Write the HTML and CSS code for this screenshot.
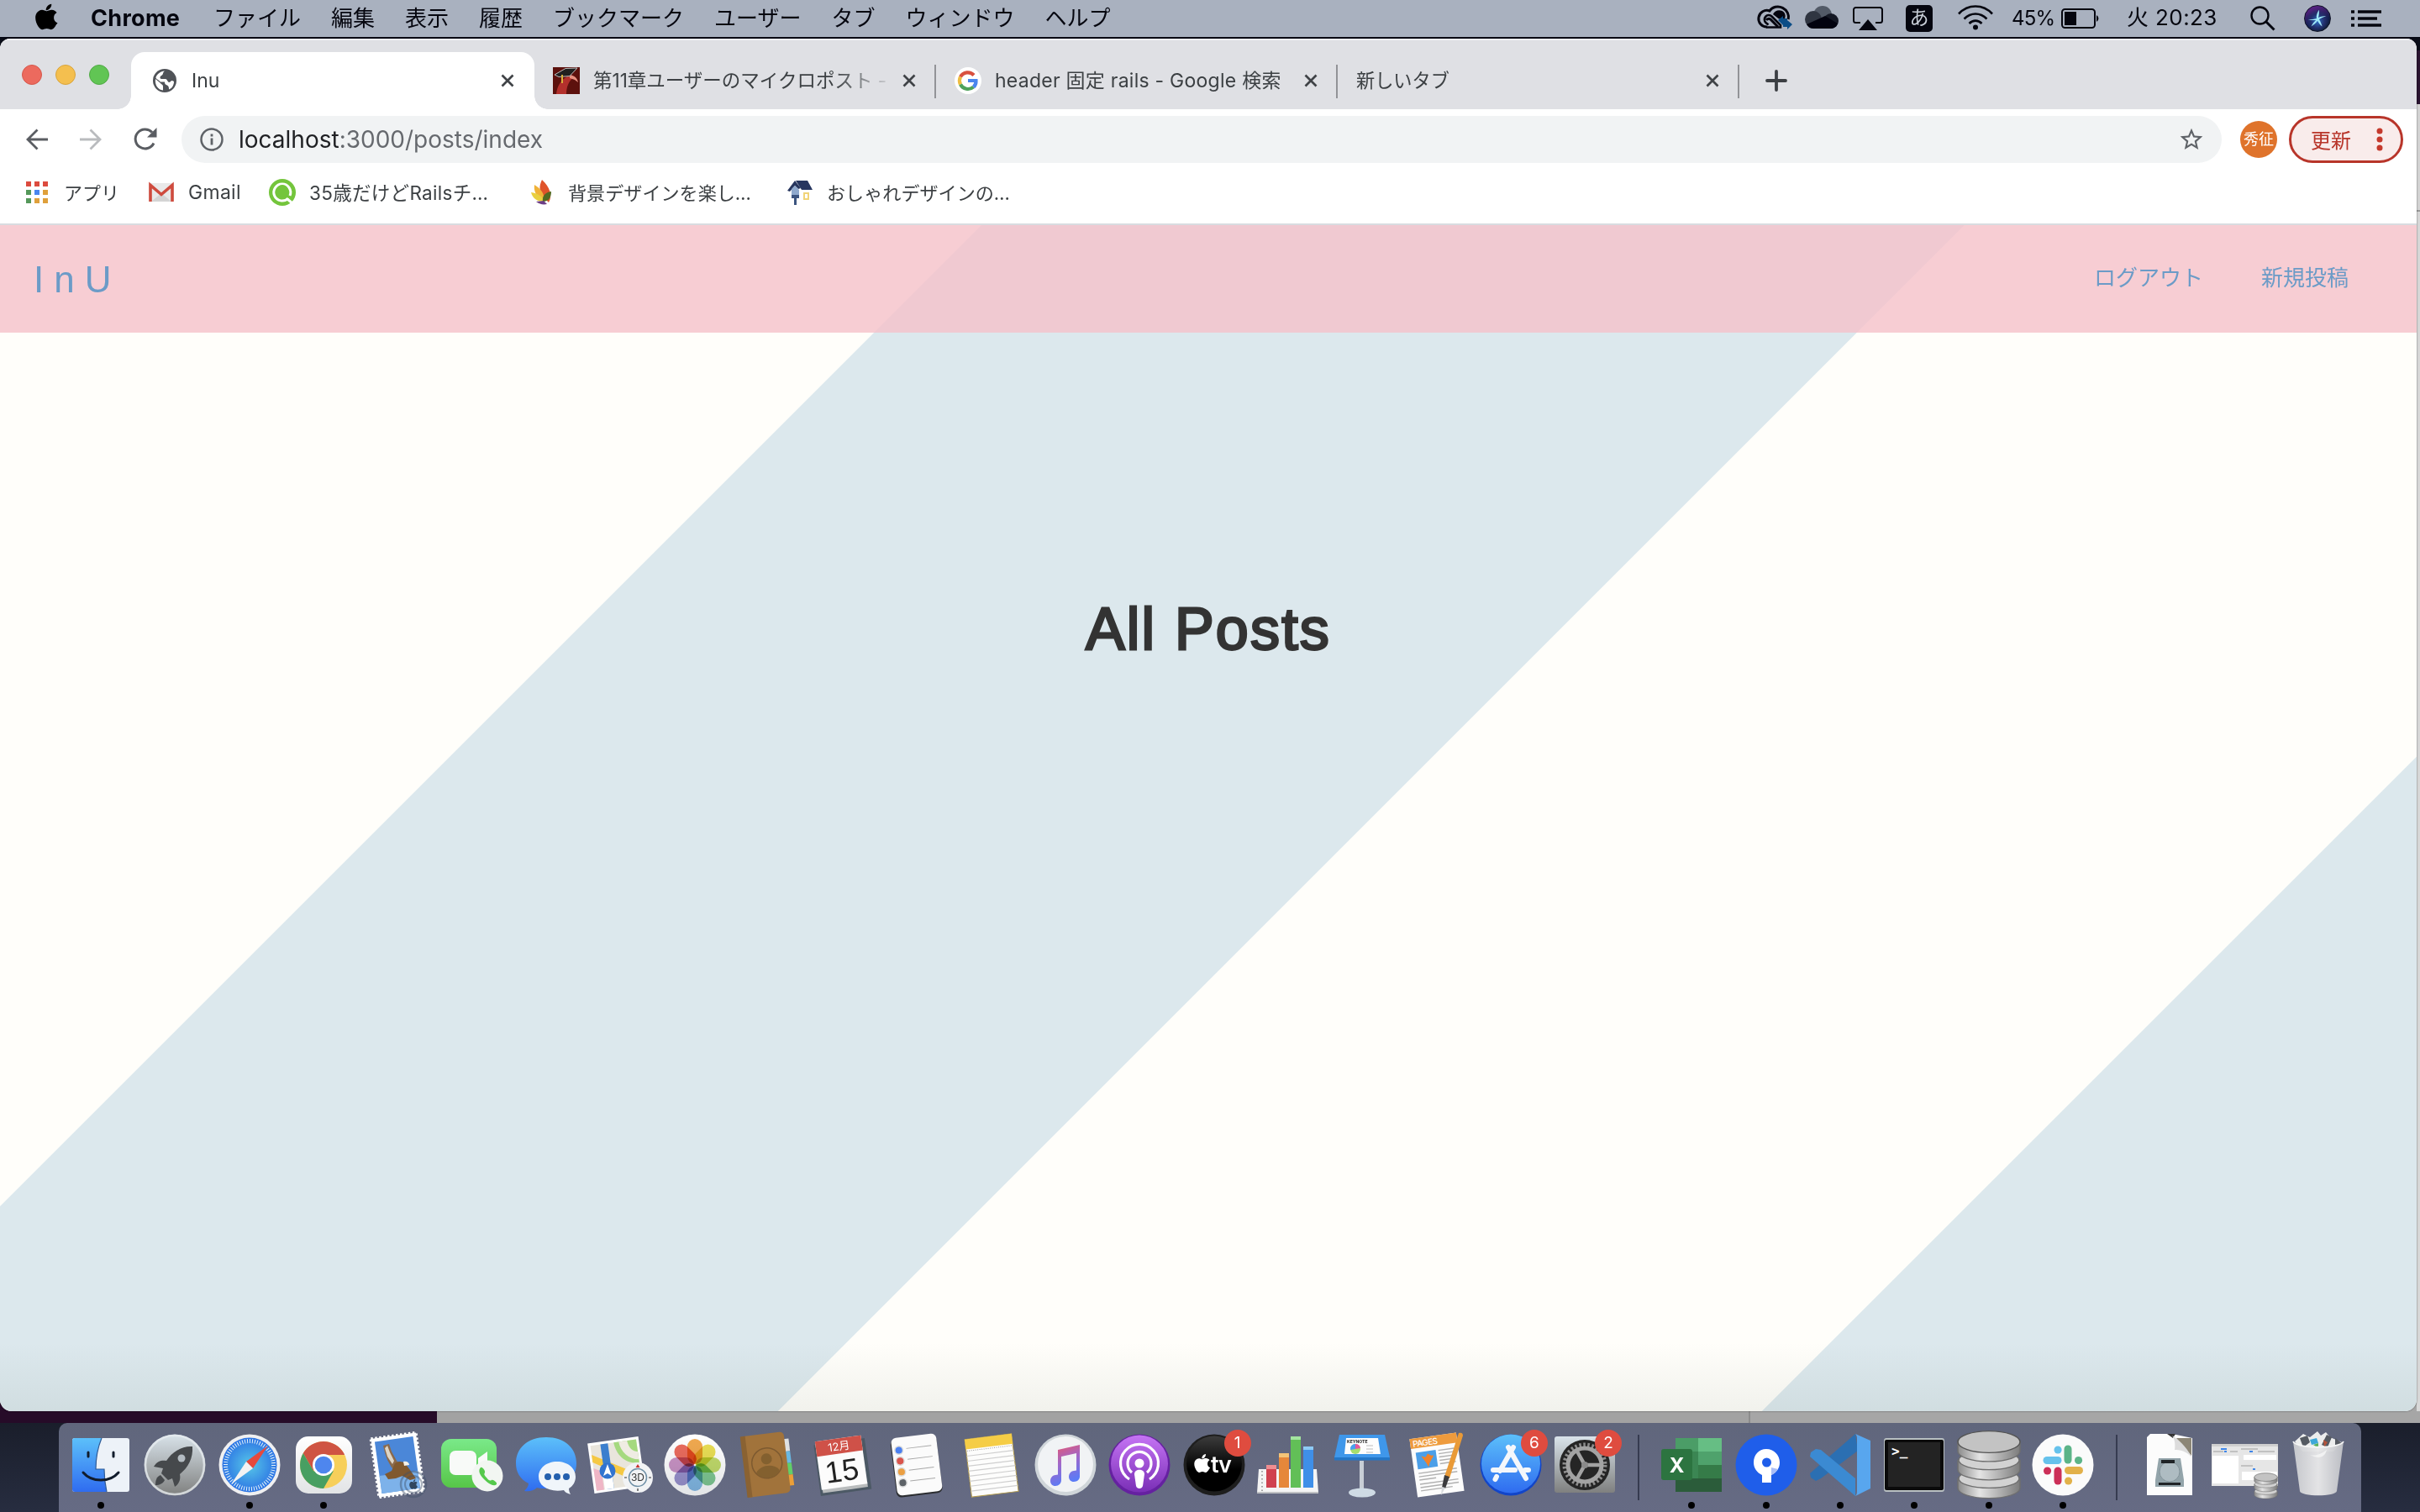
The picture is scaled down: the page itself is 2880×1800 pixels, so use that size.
FILE: index.html
```html
<!DOCTYPE html>
<html lang="ja">
<head>
<meta charset="utf-8">
<title>Inu</title>
<link rel="stylesheet" href="styles.css">
</head>
<body>
<svg class="defs" width="0" height="0" aria-hidden="true">
  <defs>
    <linearGradient id="sky" x1="0" y1="0" x2="0" y2="1"><stop offset="0" stop-color="#5cc0fa"/><stop offset="1" stop-color="#2f6cf0"/></linearGradient>
    <linearGradient id="silver" x1="0" y1="0" x2="0" y2="1"><stop offset="0" stop-color="#d9e3ea"/><stop offset="1" stop-color="#7f807f"/></linearGradient>
    <linearGradient id="white" x1="0" y1="0" x2="0" y2="1"><stop offset="0" stop-color="#fff"/><stop offset="1" stop-color="#e2e4e6"/></linearGradient>
    <linearGradient id="green" x1="0" y1="0" x2="0" y2="1"><stop offset="0" stop-color="#7ae989"/><stop offset="1" stop-color="#57c648"/></linearGradient>
    <linearGradient id="violet" x1="0" y1="0" x2="0" y2="1"><stop offset="0" stop-color="#c574f4"/><stop offset="1" stop-color="#7a2fb6"/></linearGradient>
    <linearGradient id="black" x1="0" y1="0" x2="0" y2="1"><stop offset="0" stop-color="#3c3c3c"/><stop offset=".6" stop-color="#000"/></linearGradient>
    <linearGradient id="note" x1="0" y1="0" x2=".3" y2="1"><stop offset="0" stop-color="#ee5566"/><stop offset=".5" stop-color="#a267c8"/><stop offset="1" stop-color="#5b7bf6"/></linearGradient>
    <radialGradient id="compass"><stop offset="0" stop-color="#57c7e8"/><stop offset="1" stop-color="#2c74e4"/></radialGradient>
    <linearGradient id="metal" x1="0" y1="0" x2="1" y2="0"><stop offset="0" stop-color="#8b8b8b"/><stop offset=".35" stop-color="#e4e4e4"/><stop offset="1" stop-color="#7c7c7c"/></linearGradient>
    <linearGradient id="trash" x1="0" y1="0" x2="1" y2="0"><stop offset="0" stop-color="#c9cbcf"/><stop offset=".5" stop-color="#e9e9ea"/><stop offset="1" stop-color="#bfc1c6"/></linearGradient>
    <symbol id="close" viewBox="0 0 16 16"><path d="M1.5 1.5l13 13M14.500 1.500l-13 13" stroke="#3f4246" stroke-width="2.700" fill="none"/></symbol>
    <symbol id="apple" viewBox="0 0 170 170"><path d="M150.400 130.300c-2.500 5.700-5.400 10.900-8.700 15.700-4.600 6.500-8.300 11-11.200 13.500-4.500 4.100-9.300 6.200-14.400 6.300-3.700 0-8.100-1-13.300-3.200-5.200-2.100-10-3.200-14.300-3.200-4.600 0-9.500 1.100-14.700 3.200-5.300 2.200-9.500 3.300-12.800 3.400-4.900.2-9.800-1.900-14.700-6.500-3.100-2.700-7.100-7.400-11.800-14-5.100-7.100-9.200-15.400-12.500-24.900-3.500-10.200-5.200-20.100-5.200-29.700 0-11 2.400-20.500 7.100-28.400 3.700-6.400 8.700-11.400 15-15.100 6.200-3.700 13-5.600 20.200-5.700 4 0 9.200 1.200 15.700 3.600 6.500 2.400 10.700 3.700 12.500 3.700 1.400 0 6-1.400 13.900-4.300 7.500-2.700 13.800-3.800 19-3.400 14 1.100 24.600 6.700 31.600 16.700-12.500 7.600-18.700 18.200-18.600 31.900.1 10.600 4 19.500 11.500 26.500 3.400 3.300 7.300 5.800 11.600 7.600-.9 2.700-1.900 5.300-2.900 7.800zM118.300 7.500c0 8.300-3 16.100-9.100 23.300-7.300 8.500-16.100 13.500-25.700 12.700a26 26 0 0 1-.2-3.100c0-8 3.500-16.600 9.700-23.500 3.100-3.600 7-6.500 11.700-8.900 4.700-2.300 9.200-3.600 13.400-3.800.1 1.100.2 2.200.2 3.300z"/></symbol>
    <symbol id="disks" viewBox="0 0 78 104" preserveAspectRatio="none">
      <g stroke="#6f6f6f" stroke-width="1.500" fill="url(#metal)">
        <path d="M2 72v14c0 8 16 15 37 15s37-7 37-15V72z"/><ellipse cx="39" cy="72" rx="36" ry="14" fill="#d2d2d2"/>
        <path d="M2 45v14c0 8 16 15 37 15s37-7 37-15V45z"/><ellipse cx="39" cy="45" rx="36" ry="14" fill="#d2d2d2"/>
        <path d="M2 18v14c0 8 16 15 37 15s37-7 37-15V18z"/><ellipse cx="39" cy="18" rx="37" ry="16" fill="#c3c3c3" stroke="#555"/>
      </g>
    </symbol>
  </defs>
</svg>

<header class="menubar">
  <svg class="menubar-apple" viewBox="0 0 170 170"><use href="#apple"/></svg>
  <nav class="menus">
    <b class="menu-app">Chrome</b><span>ファイル</span><span>編集</span><span>表示</span><span>履歴</span><span>ブックマーク</span><span>ユーザー</span><span>タブ</span><span>ウィンドウ</span><span>ヘルプ</span>
  </nav>
  <div class="status">
    <svg class="st-cc" viewBox="0 0 42 30"><path d="M12 26a9.800 9.800 0 1 1 3-19C18 2 25 .5 30.500 3.300 36 6 38.500 12 37.200 17" fill="none" stroke="#05050f" stroke-width="3"/><path d="M11 26.500h17V24L17.500 13.500a5 5 0 1 0-7 7.500l3 2.500" fill="none" stroke="#05050f" stroke-width="2.600"/><path d="M19 11c2-5 9-6.500 13-2.500 2 2 2 5 1 8h-7z" fill="#05050f"/><path d="M11 18a3.500 3.500 0 0 1 5-1l9 9" fill="none" stroke="#05050f" stroke-width="3"/><path d="M25 18l6-5v3h5v5h-5v3zM42 23l-6-5v3h-5v5h5v3z" fill="#0b4d86"/></svg>
    <svg class="st-cloud" viewBox="0 0 40 27"><circle cx="21" cy="11" r="11" fill="#525a67"/><circle cx="10" cy="16" r="10" fill="#2f3541"/><circle cx="31" cy="18" r="9" fill="#141824"/><path d="M2 22l22-10 15 9a9 9 0 0 1-8 6H10a9 9 0 0 1-8-5z" fill="#02030f"/></svg>
    <svg class="st-air" viewBox="0 0 36 28"><path d="M9 19H3.500A2.500 2.500 0 0 1 1 16.500V3.500A2.500 2.500 0 0 1 3.500 1h29A2.500 2.500 0 0 1 35 3.500v13a2.500 2.500 0 0 1-2.500 2.500H27" fill="none" stroke="#05060f" stroke-width="2"/><path d="M18 15l11 13H7z" fill="#05060f"/></svg>
    <span class="st-ime">あ</span>
    <svg class="st-wifi" viewBox="0 0 42 30"><g fill="none" stroke="#05060f" stroke-width="2.600"><path d="M1 10.500C12-1.500 30-1.500 41 10.500M7.500 16.500c8-8 19-8 27 0M13.500 22c4.500-4.500 10.500-4.500 15 0"/></g><circle cx="21" cy="26.500" r="3" fill="#05060f"/></svg>
    <span class="st-pct">45%</span>
    <svg class="st-batt" viewBox="0 0 46 24"><rect x="1" y="1" width="39" height="22" rx="3.500" fill="none" stroke="#05060f" stroke-width="2"/><rect x="4" y="4" width="14" height="16" fill="#05060f"/><path d="M42 8a4.500 4.500 0 0 1 0 8z" fill="#05060f"/></svg>
    <span class="st-clock">火 20:23</span>
    <svg class="st-search" viewBox="0 0 30 30"><circle cx="11.500" cy="11.500" r="10" fill="none" stroke="#05060f" stroke-width="2.400"/><path d="M18.500 18.500l10 10" stroke="#05060f" stroke-width="3"/></svg>
    <span class="st-siri"><svg viewBox="0 0 32 32"><path d="M4 18c5-1 8-1 11-2-1-4 1-8 3-11 0 4 0 7-1 10 4-2 7-2 10-2-3 1-6 2-9 4 2 3 3 6 4 9-3-2-4-4-6-7-2 3-5 5-8 7 2-4 4-6 6-8-3 0-6 0-10 0z" fill="#9fe8f7"/></svg></span>
    <svg class="st-list" viewBox="0 0 36 20"><path d="M0 2h4M8 2h28M0 10h4M8 10h23M0 18h4M8 18h28" stroke="#05060f" stroke-width="3.600"/></svg>
  </div>
</header>

<main class="browser">
  <div class="tabstrip">
    <div class="lights"><i class="red"></i><i class="yellow"></i><i class="green"></i></div>
    <div class="tab tab-active">
      <svg class="globe" viewBox="0 0 28 28"><circle cx="14" cy="14" r="14" fill="#505358"/><path d="M3 12l6 5c1 2 3 1 3 4v4.500C6 25 2 19 3 12zM14 2.500c-3 2-1 4-4 5.500-2 1-2 4 0 4h5c2 0 2 3 4 4 2 0 2-2 4-2l2 1c0 4-2 8-6 9.500 0-2 0-4-2-5s-3-1-3-4H9C7 13 3 12 3.500 10 5 6 9 3 14 2.500z" fill="#fff"/></svg>
      <span class="tab-title">Inu</span><svg class="x"><use href="#close"/></svg>
    </div>
    <div class="tab">
      <svg class="fav" viewBox="0 0 32 32"><path fill="#5c110d" d="M0 0h32v32H0z"/><path d="M4 32c1-10 6-17 13-21l8 1c-6 4-9 11-9 20z" fill="#b3302c"/><path d="M20 9c6 1 9 4 10 9l-4-3-6-2z" fill="#e79080"/><path d="M2 9L15 1.500l14-.5-9 9.500-13 1z" fill="#20201f" stroke="#bbb" stroke-width="1"/><path d="M11 9v10" stroke="#d8b13a" stroke-width="2"/></svg>
      <span class="tab-title fade t2">第11章ユーザーのマイクロポスト -</span><svg class="x"><use href="#close"/></svg>
    </div>
    <div class="tab">
      <svg class="fav" viewBox="0 0 32 32"><circle cx="16" cy="16" r="16" fill="#fff"/><g fill="none" stroke-width="4.200"><path d="M23 9.500A10 10 0 0 0 7 11.500" stroke="#d9513f"/><path d="M7 11.500a10 10 0 0 0 0 9" stroke="#eebd42"/><path d="M7 20.500a10 10 0 0 0 15.500 3" stroke="#4ea25a"/><path d="M16 16h9.500c.2 3.500-1 6-3 7.700" stroke="#4a86ee"/></g></svg>
      <span class="tab-title t3">header 固定 rails - Google 検索</span><svg class="x"><use href="#close"/></svg>
    </div>
    <div class="tab">
      <span class="tab-title t4">新しいタブ</span><svg class="x"><use href="#close"/></svg>
    </div>
    <svg class="plus" viewBox="0 0 24 24"><path d="M12 1v22M1 12h22" stroke="#3c3f43" stroke-width="3.800" stroke-linecap="round"/></svg>
  </div>

  <div class="toolbar">
    <svg class="back" viewBox="0 0 26 26"><path d="M26 13H2M13.500 1.500L2 13l11.500 11.500" fill="none" stroke="#5a5d62" stroke-width="2.800"/></svg>
    <svg class="fwd" viewBox="0 0 26 26"><path d="M0 13h24M12.500 1.500L24 13 12.500 24.500" fill="none" stroke="#b9bbbe" stroke-width="2.800"/></svg>
    <svg class="reload" viewBox="0 0 28 28"><path d="M24 18.500A11.500 11.500 0 1 1 22 5.500" fill="none" stroke="#5a5d62" stroke-width="3"/><path d="M27.500 0v11.500H16z" fill="#5a5d62"/></svg>
    <div class="omnibox">
      <svg class="info" viewBox="0 0 28 28"><circle cx="14" cy="14" r="12.500" fill="none" stroke="#5f6368" stroke-width="2.500"/><path d="M14 12.500v8M14 7.500v3" stroke="#5f6368" stroke-width="2.800"/></svg>
      <span class="url"><b>localhost</b>:3000/posts/index</span>
      <svg class="star" viewBox="0 0 24 24"><path d="M22 9.240l-7.190-.62L12 2 9.190 8.630 2 9.240l5.460 4.730L5.820 21 12 17.270 18.180 21l-1.630-7.030L22 9.240zM12 15.400l-3.760 2.270 1-4.280-3.320-2.880 4.380-.38L12 6.100l1.710 4.040 4.380.38-3.320 2.880 1 4.280L12 15.400z" fill="#5f6368"/></svg>
    </div>
    <span class="avatar">秀征</span>
    <button class="update"><span>更新</span><svg viewBox="0 0 8 28"><g fill="#c5392c"><circle cx="4" cy="4" r="3.500"/><circle cx="4" cy="14" r="3.500"/><circle cx="4" cy="24" r="3.500"/></g></svg></button>
  </div>

  <div class="bookmarks">
    <a class="bm bm-apps"><svg viewBox="0 0 26 26"><path fill="#dc4b3e" d="M0 0h6v6H0zM10 0h6v6h-6zM20 0h6v6h-6z"/><path fill="#55985a" d="M0 10h6v6H0zM0 20h6v6H0z"/><path fill="#4a86ee" d="M10 10h6v6h-6z"/><path fill="#dfa03b" d="M20 10h6v6h-6zM10 20h6v6h-6zM20 20h6v6h-6z"/></svg><span>アプリ</span></a>
    <a class="bm bm-gmail"><svg viewBox="0 0 30 22"><rect width="30" height="22" rx="2" fill="#e9e9e9"/><path d="M3 22l12-10 12 10z" fill="#d4d4d4"/><path d="M2 22V2.500l13 11 13-11V22" fill="none" stroke="#cf4b3e" stroke-width="3.600"/></svg><span>Gmail</span></a>
    <a class="bm bm-rails"><svg viewBox="0 0 32 32"><circle cx="16" cy="16" r="16" fill="#74c53c"/><path d="M23 23a10 10 0 1 1 2-3" fill="none" stroke="#fff" stroke-width="3"/><circle cx="16" cy="14" r="7" fill="#74c53c"/><path d="M22 24l6 5" stroke="#fff" stroke-width="3"/></svg><span>35歳だけどRailsチ…</span></a>
    <a class="bm bm-leaf"><svg viewBox="0 0 26 30"><path d="M14 0c-4 8-3 14 1 20l7 7c5-8 1-19-8-27z" fill="#e0532a"/><path d="M5 6c-1 8 2 14 11 19 2-8-4-15-11-19z" fill="#f0b238"/><path d="M1 15c2 8 8 11 16 11-2-6-8-10-16-11z" fill="#e9cf3f"/><path d="M25 14c-8 1-11 6-10 12 7 0 10-5 10-12z" fill="#526a22"/><path d="M7 26c4 3 8 4 13 3l-4-4z" fill="#6c3e86"/></svg><span>背景デザインを楽し…</span></a>
    <a class="bm bm-house"><svg viewBox="0 0 30 30"><path d="M0 13L9 1l7 9-3 1-4-4-6 7z" fill="#27365f"/><path d="M10 1h14l6 11H17z" fill="#27365f"/><path d="M5 11l4-4 5 5v10H5z" fill="#8fa9cd"/><path d="M5 18h9v4H5zM8 22h3v8H8z" fill="#3c5580"/><rect x="20" y="16" width="5" height="7" fill="none" stroke="#f1d478" stroke-width="2"/></svg><span>おしゃれデザインの…</span></a>
  </div>

  <section class="page">
    <header class="site-header">
      <a class="logo">InU</a>
      <nav class="site-nav"><a>ログアウト</a><a>新規投稿</a></nav>
    </header>
    <h1>All Posts</h1>
  </section>
</main>

<footer class="dock">
  <div class="app run"><svg viewBox="0 0 88 106"><rect x="10" y="18" width="68" height="64" rx="3" fill="#edf2f8"/><path d="M45 18c-5 12-7 24-7 37h10c0 9 1 18 3 27H13a3 3 0 0 1-3-3V21a3 3 0 0 1 3-3z" fill="url(#sky)"/><path d="M45 18c-5 12-7 24-7 37h10c0 9 1 18 3 27" fill="none" stroke="#2f5b96" stroke-width="1.200"/><path d="M23 59c10 12 32 12 42 0M29 35v5M59 35v5" fill="none" stroke="#111c2c" stroke-width="3" stroke-linecap="round"/></svg></div>
  <div class="app"><svg viewBox="0 0 88 106"><circle cx="44" cy="50" r="36.500" fill="url(#silver)"/><circle cx="44" cy="50" r="35" fill="none" stroke="#e6ebef" stroke-width="2.500" opacity=".8"/><path d="M65 28c-12-1-24 6-31 17-5-1-11 0-15 7l11 2-2 6 8 8 5-2 3 10c6-4 7-10 6-15 10-8 16-19 15-33z" fill="#46494c"/><path d="M27 62c-5 2-6 7-6 12 5 0 9-2 11-6z" fill="#46494c"/><circle cx="52" cy="42" r="4.500" fill="#b4bcc2"/></svg></div>
  <div class="app run"><svg viewBox="0 0 88 106"><circle cx="44" cy="50" r="36.500" fill="#f0f0f1"/><circle cx="44" cy="50" r="32.500" fill="url(#compass)"/><circle cx="44" cy="50" r="28.500" fill="none" stroke="#e6f3fb" stroke-width="5" stroke-dasharray="1 1.980"/><path d="M66 27L48 54l-8-8z" fill="#e5493d"/><path d="M22 73l18-27 8 8z" fill="#f3f3f3"/></svg></div>
  <div class="app run"><svg viewBox="0 0 88 106"><rect x="11" y="16" width="67" height="68" rx="15" fill="url(#white)"/><circle cx="44" cy="50" r="28" fill="#f7cf5a"/><path d="M19.800 36A28 28 0 0 1 68.200 36L69 38H44L32 57z" fill="#cf5443"/><path d="M19.800 36A28 28 0 0 0 44 78l12-21-12 5-12-5z" fill="#489f62"/><circle cx="44" cy="50" r="13" fill="#fff"/><circle cx="44" cy="50" r="10.300" fill="#4e86ee"/></svg></div>
  <div class="app"><svg viewBox="0 0 88 106"><g transform="rotate(-8 44 50)"><rect x="17" y="15" width="54" height="70" fill="#fff"/><rect x="17" y="15" width="54" height="70" fill="none" stroke="#fff" stroke-width="3.500" stroke-dasharray="2.500 2.500"/><rect x="21" y="19" width="46" height="62" fill="#4b87d8"/><path d="M21 60h46v21H21z" fill="#7db2ea"/></g><path d="M27 27l7-2 3 9 6 11 4 4-4 8-6-4-5-9-3-9z" fill="#8b6a4b"/><path d="M29 30l3 10 6 9 2-4-5-10-3-8z" fill="#ddd5c6"/><path d="M41 48c5-3 9-2 12 0l6 8 7 10-7 2-9-5-8 3-9 1-4-6 8-4z" fill="#80592f"/><path d="M51 46c4-1 7 1 7 4l-6 1z" fill="#f4f1e8"/><circle cx="63" cy="73" r="15" fill="none" stroke="#405068" stroke-opacity=".45" stroke-width="2.500"/><circle cx="63" cy="73" r="10" fill="none" stroke="#405068" stroke-opacity=".45" stroke-width="2"/><use href="#apple" x="57" y="67" width="12" height="12" opacity=".6"/></svg></div>
  <div class="app"><svg viewBox="0 0 88 106"><rect x="7" y="19" width="66" height="58" rx="12" fill="url(#green)"/><rect x="17" y="33" width="32" height="29" rx="7" fill="#f8faf8"/><path d="M51 42l11-8v27l-11-8z" fill="#f8faf8"/><circle cx="62" cy="63" r="18.500" fill="#f2f6f2"/><path d="M54 53c-3 3-2 8 4 14s12 9 15 6c1-2-4-6-6-5s-3 1-6-3c-3-3-3-4-2-6s-3-7-5-6z" fill="#55c94c"/></svg></div>
  <div class="app"><svg viewBox="0 0 88 106"><path d="M44 17c22 0 36 13 36 31S66 78 44 78c-4 0-8 0-11-1-4 4-10 5-15 4 3-3 5-6 5-9C13 67 8 59 8 48c0-18 14-31 36-31z" fill="url(#sky)"/><path d="M57 46c13 0 22 8 22 18 0 6-3 11-8 14 0 3 1 5 2 7-4-1-7-3-8-5-18 3-30-5-30-16 0-10 9-18 22-18z" fill="#f0f5fa"/><g fill="#2460ae"><circle cx="46" cy="64" r="4"/><circle cx="57" cy="64" r="4"/><circle cx="68" cy="64" r="4"/></g></svg></div>
  <div class="app"><svg viewBox="0 0 88 106"><g transform="rotate(-8 40 50)"><rect x="9" y="20" width="61" height="60" fill="#fff"/><rect x="12" y="23" width="55" height="54" fill="#e9e5dc"/><path d="M40 23h27v28c-16 0-26-12-27-28z" fill="#a5d97f"/><path d="M46 23h10c1 10 5 13 11 15v9C55 45 47 36 46 23z" fill="#efece3"/><path d="M12 34l55 32v11L12 43z" fill="#f5c843"/><path d="M12 50l9 5v22h-9z" fill="#efb6c6"/><path d="M24 23h9v54h-9z" fill="#3b7fce"/><path d="M22 56h11v21H22z" fill="#fff"/></g><circle cx="29" cy="57" r="9.500" fill="#3174d0"/><path d="M29 49l5 14-5-3-5 3z" fill="#fff"/><circle cx="65" cy="65" r="18" fill="#f2f3f5"/><circle cx="65" cy="65" r="10.500" fill="none" stroke="#6e8fa5" stroke-width="1.500"/><path d="M65 49l2.500 4h-5z" fill="#c9302b"/><path d="M65 78v3M49 65h3M78 65h3" stroke="#333" stroke-width="1.200"/><text x="65" y="69" class="ic-3d">3D</text></svg></div>
  <div class="app"><svg viewBox="0 0 88 106"><circle cx="44" cy="50" r="36.500" fill="url(#white)"/><g class="petals"><rect x="35" y="19" width="18" height="30" rx="9" fill="#f0a240"/><rect x="35" y="19" width="18" height="30" rx="9" fill="#e9dc45" transform="rotate(45 44 50)"/><rect x="35" y="19" width="18" height="30" rx="9" fill="#bcd75d" transform="rotate(90 44 50)"/><rect x="35" y="19" width="18" height="30" rx="9" fill="#75c48a" transform="rotate(135 44 50)"/><rect x="35" y="19" width="18" height="30" rx="9" fill="#78b3e2" transform="rotate(180 44 50)"/><rect x="35" y="19" width="18" height="30" rx="9" fill="#9089c9" transform="rotate(225 44 50)"/><rect x="35" y="19" width="18" height="30" rx="9" fill="#c58abf" transform="rotate(270 44 50)"/><rect x="35" y="19" width="18" height="30" rx="9" fill="#ea5e4f" transform="rotate(315 44 50)"/></g></svg></div>
  <div class="app"><svg viewBox="0 0 88 106"><g transform="rotate(-7 40 50)"><path d="M62 22h9v15h-9z" fill="#dfe1e2"/><path d="M62 37h9v14h-9z" fill="#6ab9e3"/><path d="M62 51h9v14h-9z" fill="#62cf68"/><path d="M62 65h9v13h-9z" fill="#eb9f37"/><path d="M16 13h45a5 5 0 0 1 5 5v63a5 5 0 0 1-5 5H16z" fill="#a1733b"/><path d="M14 13h6v73h-6z" fill="#8a6232"/><circle cx="42" cy="48" r="18" fill="none" stroke="#7d5a30" stroke-width="1.500"/><circle cx="42" cy="43" r="6.500" fill="#83602f"/><path d="M28 58c6-9 22-9 28 0-5 10-22 10-28 0z" fill="#83602f"/></g></svg></div>
  <div class="app"><svg viewBox="0 0 88 106"><g transform="rotate(-8 44 50)"><rect x="13" y="22" width="61" height="61" fill="#4c5965"/><rect x="16" y="74" width="54" height="6" fill="#b9bcbd"/><rect x="15" y="18" width="55" height="58" fill="#fcfcfc"/><rect x="15" y="18" width="55" height="18" fill="#cf5148"/><text x="42.500" y="32" class="ic-month">12月</text><text x="42" y="69" class="ic-day">15</text></g></svg></div>
  <div class="app"><svg viewBox="0 0 88 106"><g transform="rotate(-7 44 50)"><rect x="16" y="17" width="55" height="69" rx="6" fill="#2b2d30"/><rect x="17" y="15" width="54" height="69" rx="6" fill="#fbfbfb"/><g stroke="#dcdcdc" stroke-width="1.500"><circle cx="25" cy="30" r="4.800" fill="#4b80f0"/><circle cx="25" cy="43" r="4.800" fill="#da544c"/><circle cx="25" cy="56" r="4.800" fill="#eb9f42"/><circle cx="25" cy="69" r="4.800" fill="#5d6267"/></g><path d="M34 29h30M34 42h30M34 55h30M34 68h30" stroke="#a8a8a8" stroke-width="1"/></g></svg></div>
  <div class="app"><svg viewBox="0 0 88 106"><g transform="rotate(-7 44 50)"><rect x="16" y="16" width="56" height="69" fill="#fdfdfc" stroke="#b49c4e" stroke-width="1"/><rect x="16" y="16" width="56" height="12" fill="#f5cd46"/><path d="M16 36h56M16 42h56M16 48h56M16 54h56M16 60h56M16 66h56M16 72h56M16 78h56" stroke="#cfcfcf" stroke-width="1.200"/><path d="M17 30h54" stroke="#999" stroke-width="1" stroke-dasharray="1 1.500"/></g></svg></div>
  <div class="app"><svg viewBox="0 0 88 106"><circle cx="44" cy="50" r="36.500" fill="#cfd5d9"/><circle cx="44" cy="49" r="33" fill="#f1f3f5"/><path d="M35 32l26-6v38c0 3-3 6-7 6-8 0-8-12 0-13l3-.5V36l-18 4v28c0 4-3 7-7 7-8 0-8-12 0-13l3-.5z" fill="url(#note)"/></svg></div>
  <div class="app"><svg viewBox="0 0 88 106"><circle cx="44" cy="50" r="36.500" fill="#6521a0"/><circle cx="44" cy="48.500" r="34" fill="url(#violet)"/><g fill="none" stroke="#fff" stroke-width="3.200"><path d="M32 67a22.500 22.500 0 1 1 24 0"/><path d="M35 59a14 14 0 1 1 18 0"/></g><circle cx="44" cy="48" r="5.500" fill="#fff"/><path d="M38 61c0-7 12-7 12 0l-2 14c-1 4-7 4-8 0z" fill="#fff"/></svg></div>
  <div class="app"><svg viewBox="0 0 88 106"><circle cx="44" cy="50" r="36.500" fill="#1e1e1e"/><circle cx="44" cy="48.500" r="33" fill="url(#black)"/><g fill="#fff"><use href="#apple" x="18" y="36" width="23" height="24"/></g><text x="40" y="59" class="ic-tv">tv</text></svg><span class="badge">1</span></div>
  <div class="app"><svg viewBox="0 0 88 106"><path d="M9 55h69l2 28H7z" fill="#f4f4f4"/><path d="M7 82h73v2H7z" fill="#bfc1c4"/><g><path d="M18 50h12v27H18z" fill="#d0414f"/><path d="M33 36h12v41H33z" fill="#e6873a"/><path d="M47 16h12v61H47z" fill="#62bf57"/><path d="M62 28h12v49H62z" fill="#3f8fe8"/><path d="M18 50h12v5H18z" fill="#ef8d90"/><path d="M33 36h12v5H33z" fill="#f4c478"/><path d="M47 16h12v4H47z" fill="#a3e59f"/><path d="M62 28h12v4H62z" fill="#8ecbf6"/></g><path d="M13 57v24" stroke="#888" stroke-width="1.500" stroke-dasharray="1.500 3"/></svg></div>
  <div class="app"><svg viewBox="0 0 88 106"><path d="M41 45h5v37h-5z" fill="#c8ced6"/><ellipse cx="44" cy="83" rx="16" ry="5.500" fill="#cfdbe5"/><path d="M17 14h54l6 27H11z" fill="#3f97ea"/><path d="M11 41h66v3.500H11z" fill="#2477c7"/><path d="M25 18h38l3 19H23z" fill="#fdfdfd"/><text x="26" y="24" class="ic-key">KEYNOTE</text><circle cx="36" cy="31" r="6" fill="#a6de6e"/><path d="M36 31v-6a6 6 0 0 0-6 7z" fill="#4a9ff0"/><path d="M36 31v-6a6 6 0 0 1 6 5z" fill="#e5589b"/><path d="M49 27h8M49 31h8M49 35h8" stroke="#bbb" stroke-width="1.200"/></svg></div>
  <div class="app"><svg viewBox="0 0 88 106"><g transform="rotate(-8 44 50)"><rect x="16" y="15" width="56" height="70" fill="#fcfcfc"/><rect x="16" y="15" width="56" height="12" fill="#ee9b3d"/><text x="19" y="25" class="ic-pages">PAGES</text><rect x="21" y="32" width="24" height="20" fill="#4b9fe8"/><path d="M27 37l5 2 3-4 4 3 3 0-6 8-2 5-2-5z" fill="#f08228"/><path d="M48 33h19M48 37h19M48 41h19M48 45h19M48 49h19M21 57h46M21 61h46M21 65h20M21 70h46M21 74h46M21 78h38" stroke="#b0b0b0" stroke-width="1.400"/></g><path d="M70 12c3-1 5 0 5 3L59 66l-6-2z" fill="#e99a37"/><path d="M53 62l6 2-5 14-4-1z" fill="#3b3b3d"/><path d="M50 76l4 1-5 9z" fill="#d7dadd"/></svg></div>
  <div class="app"><svg viewBox="0 0 88 106"><circle cx="44" cy="50" r="36.500" fill="#1245c8"/><circle cx="44" cy="48.500" r="35" fill="url(#sky)"/><g stroke="#f4f7fb" stroke-width="6" stroke-linecap="round"><path d="M41 29l21 37M47 29L31 57M23 56h26M61 56h4M27 64l-1.500 3"/></g></svg><span class="badge">6</span></div>
  <div class="app"><svg viewBox="0 0 88 106"><rect x="8" y="16" width="72" height="67" rx="3" fill="url(#silver)"/><circle cx="44" cy="50" r="30" fill="#252525"/><circle cx="44" cy="50" r="24" fill="none" stroke="#8d8d8d" stroke-width="5" stroke-dasharray="2.500 2.530"/><circle cx="44" cy="50" r="20" fill="none" stroke="#a3a3a3" stroke-width="5"/><path d="M44 50h18M44 50l-9-16M44 50l-9 16" stroke="#a3a3a3" stroke-width="4.500"/><circle cx="44" cy="50" r="4" fill="#8a8a8a"/></svg><span class="badge">2</span></div>
  <i class="sep"></i>
  <div class="app run"><svg viewBox="0 0 88 106"><path d="M25 18h55v64H25z" fill="#4b9d67"/><path d="M52 18h28v16H52z" fill="#66be84"/><path d="M52 34h28v16H52z" fill="#4fa26c"/><path d="M52 50h28v16H52z" fill="#357b48"/><path d="M25 34h27v32H25z" fill="#3b8653"/><path d="M25 66h55v16H25z" fill="#2b5c3a"/><rect x="8" y="31" width="37" height="37" rx="3" fill="#2c7440"/><text x="26.500" y="59" class="ic-x">X</text></svg></div>
  <div class="app run"><svg viewBox="0 0 88 106"><circle cx="44" cy="50" r="36.500" fill="#1f5eea"/><path d="M44 31c9 0 16 7 16 16 0 7-4 12-10 15v9H39v-9c-6-3-10-8-10-15 0-9 6-16 15-16z" fill="#fff"/><path d="M50 53l8 2c-2 3-5 6-8 7z" fill="#a9bdf5"/><circle cx="44.500" cy="47" r="5.500" fill="#1f5eea"/></svg></div>
  <div class="app run"><svg viewBox="0 0 88 106"><path d="M62 13L8 60l1 5 6 4 6-3 44-33z" fill="#2b6fb2"/><path d="M15 31l-6 4-1 5 54 47V66L21 32z" fill="#3b8ad2"/><path d="M62 13l18 8v57l-18 9c2-2 2-4 2-7V20c0-3 0-5-2-7z" fill="#58a6ee"/></svg></div>
  <div class="app run"><svg viewBox="0 0 88 106"><rect x="8" y="18" width="72" height="64" rx="3" fill="#b9c0c2"/><rect x="9" y="20" width="70" height="60" rx="2" fill="#0a0a0a"/><rect x="13" y="23" width="62" height="53" fill="#232323"/><text x="17" y="39" class="ic-term">&gt;_</text></svg></div>
  <div class="app run"><svg viewBox="0 0 88 106"><use href="#disks" x="5" y="8" width="78" height="84"/></svg></div>
  <div class="app run"><svg viewBox="0 0 88 106"><circle cx="44" cy="50" r="36.500" fill="#fbfbfb"/><g stroke-width="9" stroke-linecap="round"><path d="M50 31v13" stroke="#5cb488"/><path d="M62.500 44.500h.1" stroke="#5cb488" /><path d="M25 44.500h13" stroke="#66c2ec"/><path d="M38 32h.1" stroke="#66c2ec"/><path d="M38 57v12" stroke="#cc2f58"/><path d="M25.500 57h.1" stroke="#cc2f58"/><path d="M50.500 56.500h13" stroke="#e2b14a"/><path d="M50.500 69h.1" stroke="#e2b14a"/></g></svg></div>
  <i class="sep"></i>
  <div class="app"><svg viewBox="0 0 88 106"><path d="M17 17l4-4h26l24 5v68H17z" fill="#fcfcfc"/><path d="M52 18h18v21z" fill="#8c8676"/><path d="M41 13h10l-3 5z" fill="#333"/><path d="M47 15c6 4 17 12 23 26-6-8-14-9-20-9 1-7 0-13-3-17z" fill="#dcdcdc"/><path d="M31 42h26l4 26v8H27v-8z" fill="#93a4aa"/><circle cx="44" cy="58" r="12" fill="#aebcc2" stroke="#83939a"/><path d="M34 44h16v4H34zM31 71h26v3H31z" fill="#202427"/></svg></div>
  <div class="app"><svg viewBox="0 0 88 106"><rect x="5" y="25" width="79" height="50" fill="#e6e6e6"/><path d="M6 39h31v33H6zM43 38h39v6H43zM41 58h42v10H41z" fill="#fff"/><path d="M5 25h79v3H5z" fill="#cfcfcf"/><path d="M16 31h7M20 34h3M50 34h4M54 55h3" stroke="#3f86ea" stroke-width="2"/><path d="M7 34h12M27 34h9M40 31h20M60 34h20M40 51h14" stroke="#b5b5b5" stroke-width="1.500"/><use href="#disks" x="55" y="59" width="29" height="32"/></svg></div>
  <div class="app"><svg viewBox="0 0 88 106"><path d="M16 22l10-9 8 4 9-7 4 5 6-4 5 6 14 6-10 11H25z" fill="#eceded"/><path d="M22 18l9-3 3 8-8 6zM54 14l6 3-5 12-7-3zM64 18l8 6-8 5z" fill="#555a62"/><path d="M34 20l8-2 2 6-8 2z" fill="#3ea7d8"/><path d="M38 26l6-2v6z" fill="#58b05d"/><path d="M50 20l5 3-4 6z" fill="#b3523a"/><path d="M14 22c4 9 56 9 60 0l-8 59c-1 7-43 7-44 0z" fill="url(#trash)" opacity=".96"/><path d="M14 22c4 9 56 9 60 0" fill="none" stroke="#f6f6f6" stroke-width="1.800"/><path d="M34 38c8 2 14-2 20-6-2 8-8 12-20 6z" fill="#f6f6f6" opacity=".8"/></svg></div>
</footer>
</body>
</html>
```
FILE: styles.css
```css
* { box-sizing: border-box; }

body {
  margin: 0;
  width: 2880px;
  height: 1800px;
  overflow: hidden;
  display: flex;
  flex-direction: column;
  font-family: Inter, "Noto Sans CJK JP", sans-serif;
  color: #3c4043;
  /* windows stacked behind the browser, over the denim wallpaper */
  background:
    linear-gradient(#2a1430, #2a1430) 2876px 60px / 4px 64px no-repeat,
    linear-gradient(#d4d4d4 0 126px, #9a9a9a 126px 128px, #d8d8d8 128px) 2876px 124px / 4px 1556px no-repeat,
    linear-gradient(#260b28, #260b28) 0 1600px / 520px 94px no-repeat,
    linear-gradient(90deg, #a2a2a2 0 1561px, #8c8c8c 1561px 1563px, #a6a6a6 1563px) 520px 1600px / 2360px 94px no-repeat,
    linear-gradient(#0a0d18, #0a0d18) 0 0 / 100% 60px no-repeat,
    linear-gradient(#1a1e2b, #272d40) 0 1694px / 100% 106px no-repeat #242a3c;
}

svg { display: block; flex: none; overflow: visible; }
.defs { position: absolute; }

/* menu bar */
.menubar {
  height: 46px;
  flex: none;
  display: flex;
  align-items: center;
  justify-content: space-between;
  padding: 0 46px 2px 39px;
  background: linear-gradient(#a9b1bf 0 44px, #050814 44px);
  color: #05060f;
  font-size: 26px;
}
.menubar-apple { width: 32px; height: 32px; margin-right: 37px; margin-top: -5px; }
.menus { display: flex; gap: 36px; flex: 1; align-items: center; line-height: 44px; white-space: nowrap; }
.menu-app { width: 110px; font-weight: 700; font-size: 27px; letter-spacing: .3px; }
.status { display: flex; align-items: center; height: 44px; }
.st-cc { width: 42px; height: 30px; margin-right: 15px; margin-top: -3px; }
.st-cloud { width: 40px; height: 27px; margin-right: 17px; margin-top: -3px; }
.st-air { width: 36px; height: 28px; margin-right: 27px; }
.st-ime { width: 32px; height: 32px; border-radius: 5px; background: #05060f; color: #c9cfd8; font-size: 23px; line-height: 30px; text-align: center; margin-right: 30px; }
.st-wifi { width: 42px; height: 30px; margin-right: 22px; margin-top: -2px; }
.st-pct { width: 59px; font-size: 24px; letter-spacing: -.8px; margin-top: -2px; }
.st-batt { width: 46px; height: 24px; margin-right: 32px; }
.st-clock { width: 147px; font-size: 26px; letter-spacing: .4px; white-space: nowrap; line-height: 44px; margin-top: -3px; }
.st-search { width: 30px; height: 30px; margin-right: 34px; }
.st-siri { width: 32px; height: 32px; border-radius: 50%; margin-right: 24px; background: radial-gradient(circle at 50% 60%, #2f70c8 0, #23306e 35%, transparent 60%), linear-gradient(160deg, #6a2390, #111d4c 60%, #07191f); border: 1px solid #101426; }
.st-list { width: 36px; height: 20px; }

/* browser window */
.browser {
  width: 2876px;
  height: 1634px;
  flex: none;
  display: flex;
  flex-direction: column;
  background: #fff;
  border-radius: 12px 12px 14px 14px;
  overflow: hidden;
  box-shadow: 0 0 2px rgba(0, 0, 0, .6);
}
.tabstrip {
  height: 84px;
  flex: none;
  display: flex;
  align-items: flex-end;
  background: #dfe0e4;
  border-top: 2px solid #eeeff2;
}
.lights { width: 156px; height: 68px; display: flex; gap: 16px; padding: 15px 0 0 26px; }
.lights i { width: 24px; height: 24px; border-radius: 50%; border: 1px solid; }
.lights .red { background: #ec6a5e; border-color: #d5574b; }
.lights .yellow { background: #f4bf4f; border-color: #d9a43b; }
.lights .green { background: #61c554; border-color: #50a945; }
.tab {
  width: 478px;
  height: 68px;
  display: flex;
  align-items: center;
  padding: 0 24px 0 22px;
  position: relative;
  font-size: 23px;
}
.tab:not(.tab-active)::after { content: ""; position: absolute; right: 0; top: 15px; width: 2px; height: 40px; background: #929397; }
.tab-active { width: 480px; background: #fff; border-radius: 16px 16px 0 0; padding-left: 26px; }
.tab-active::before, .tab-active::after {
  content: ""; position: absolute; bottom: 0; width: 16px; height: 16px;
}
.tab-active::before { left: -16px; background: radial-gradient(circle at 0 0, transparent 15.500px, #fff 16px); }
.tab-active::after { right: -16px; background: radial-gradient(circle at 100% 0, transparent 15.500px, #fff 16px); }
.globe { width: 28px; height: 28px; margin-right: 18px; }
.fav { width: 32px; height: 32px; margin-right: 16px; }
.tab-title { flex: 1; min-width: 0; white-space: nowrap; line-height: 40px; }
.t2 { font-size: 22.500px; }
.t3 { letter-spacing: .25px; }
.t4 { font-size: 22.200px; }
.fade { -webkit-mask-image: linear-gradient(90deg, #000 78%, transparent 98%); mask-image: linear-gradient(90deg, #000 78%, transparent 98%); }
.x { width: 16px; height: 16px; }
.plus { width: 24px; height: 24px; margin: 0 0 22px 32px; }

.toolbar { height: 72px; flex: none; display: flex; align-items: center; padding: 0 16px 0 31px; }
.back { width: 26px; height: 26px; margin-right: 38px; }
.fwd { width: 26px; height: 26px; margin-right: 38px; }
.reload { width: 28px; height: 28px; margin-right: 29px; }
.omnibox { width: 2428px; height: 56px; border-radius: 28px; background: #f1f3f4; display: flex; align-items: center; padding: 0 20px 0 22px; margin-right: 22px; }
.info { width: 28px; height: 28px; margin-right: 18px; }
.url { flex: 1; font-size: 28px; color: #66696e; }
.url b { font-weight: 400; color: #202124; }
.star { width: 32px; height: 32px; }
.avatar { width: 44px; height: 44px; border-radius: 50%; background: #df732b; color: #fff; font-size: 18px; line-height: 43px; text-align: center; margin-right: 14px; }
.update { width: 136px; height: 56px; border: 3px solid #b8352a; border-radius: 28px; background: #f9eceb; color: #b8352a; font: 24px Inter, "Noto Sans CJK JP", sans-serif; display: flex; align-items: center; padding: 0 21px 0 23px; justify-content: space-between; }
.update span { margin-top: -2px; }
.update svg { width: 8px; height: 28px; }

.bookmarks { height: 66px; flex: none; display: flex; align-items: flex-start; padding: 9px 0 0 31px; border-bottom: 2px solid #d9dce0; font-size: 23px; white-space: nowrap; }
.bm { display: flex; align-items: center; height: 36px; }
.bm span { margin-top: -2px; }
.bm-apps { width: 146px; gap: 19px; font-size: 22px; }
.bm-apps svg { width: 26px; height: 26px; }
.bm-gmail { width: 143px; gap: 17px; }
.bm-gmail svg { width: 30px; height: 22px; }
.bm-gmail span { margin-top: 0; letter-spacing: .3px; }
.bm-rails { width: 311px; gap: 16px; font-size: 22.500px; letter-spacing: .3px; }
.bm-rails svg { width: 32px; height: 32px; }
.bm-leaf { width: 306px; gap: 19px; font-size: 22.100px; }
.bm-leaf svg { width: 26px; height: 30px; }
.bm-house { gap: 17px; font-size: 22.100px; }
.bm-house svg { width: 30px; height: 30px; }

/* web page */
.page {
  flex: 1;
  background:
    linear-gradient(transparent 1330px, rgba(60, 80, 60, .07) 1412px),
    linear-gradient(135deg, #fffefa 0 825.500px, #dce8ed 826.500px 1652.500px, #fffefa 1653.500px 2480.500px, #dce8ed 2481.500px);
}
.site-header {
  height: 128px;
  display: flex;
  justify-content: space-between;
  align-items: center;
  padding: 0 81px 0 40px;
  background: rgba(245, 192, 201, .8);
  color: #6b9bc7;
}
.logo { font: 44px "Liberation Sans", Arial, sans-serif; letter-spacing: 12px; padding-top: 2px; }
.site-nav { display: flex; gap: 69px; font-size: 26px; line-height: 40px; padding-bottom: 3px; }
.page h1 {
  margin: 311px 0 0;
  text-align: center;
  font: 400 70px/84px "Liberation Sans", Arial, sans-serif;
  letter-spacing: 2.200px;
  color: #333;
  -webkit-text-stroke: 2.800px #333;
}

/* dock */
.dock {
  width: 2740px;
  height: 106px;
  flex: none;
  margin: 14px 0 0 70px;
  padding-left: 6.200px;
  display: flex;
  background: linear-gradient(#60667c, #666b84);
  border-radius: 10px 10px 0 0;
}
.app { width: 88.300px; flex: none; position: relative; }
.app > svg { width: 88px; height: 106px; }
.run::after { content: ""; position: absolute; left: 40px; top: 94px; width: 8px; height: 8px; border-radius: 50%; background: #000; }
.sep { width: 39px; flex: none; display: flex; }
.sep::before { content: ""; width: 2px; height: 78px; margin: 14px 0 0 19px; background: #363b50; }
.badge { position: absolute; left: 56px; top: 8px; width: 32px; height: 32px; border-radius: 50%; background: #df4c3f; color: #fff; font-size: 19px; line-height: 32px; text-align: center; }
.petals rect { mix-blend-mode: multiply; opacity: .92; }
.ic-3d { font: 12px Inter, sans-serif; text-anchor: middle; fill: #333; }
.ic-month { font: 13px Inter, "Noto Sans CJK JP", sans-serif; text-anchor: middle; fill: #fff; }
.ic-day { font: 36px "Liberation Sans", sans-serif; text-anchor: middle; fill: #222; }
.ic-tv { font: 600 27px Inter, sans-serif; fill: #fff; letter-spacing: -1px; }
.ic-key { font: 800 5px Inter, sans-serif; fill: #333; }
.ic-pages { font: 500 10px Inter, sans-serif; fill: #fff; letter-spacing: -.6px; }
.ic-x { font: 700 24px Inter, sans-serif; fill: #fff; text-anchor: middle; }
.ic-term { font: 700 16px "DejaVu Sans Mono", monospace; fill: #fff; }
```
